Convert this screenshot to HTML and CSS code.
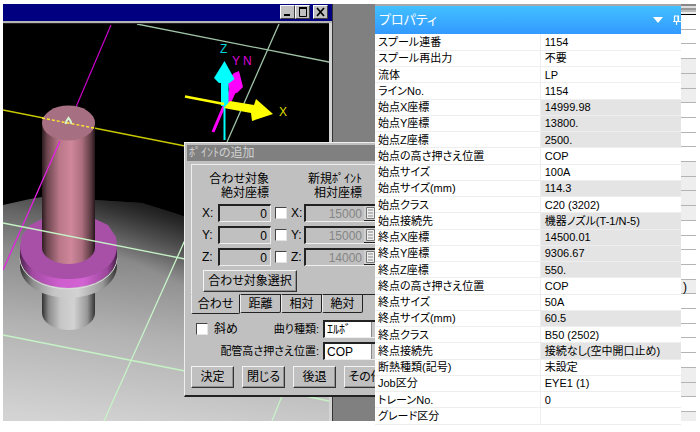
FILE: index.html
```html
<!DOCTYPE html>
<html lang="ja">
<head>
<meta charset="utf-8">
<title>プロパティ</title>
<link rel="stylesheet" href="styles.css">
</head>
<body>
<main class="desktop">
  <section class="viewer">
    <header class="viewer-bar">
      <button class="win-btn" aria-label="最小化"><svg viewBox="0 0 12 10"><path d="M2 8h6" stroke="#000" stroke-width="2"/></svg></button>
      <button class="win-btn" aria-label="最大化"><svg viewBox="0 0 12 10"><path d="M2 1.500h8M2.500 1v8.500h7V1" fill="none" stroke="#000"/><path d="M2 1h8" stroke="#000" stroke-width="2"/></svg></button>
      <button class="win-btn win-close" aria-label="閉じる"><svg viewBox="0 0 12 10"><path d="M2 1l7 8M9 1l-7 8" stroke="#000" stroke-width="1.700"/></svg></button>
    </header>
    <svg class="scene" viewBox="3 24 326 397" preserveAspectRatio="xMinYMin slice">
      <defs>
        <linearGradient id="ground" gradientUnits="userSpaceOnUse" x1="95" y1="194" x2="68" y2="421">
          <stop offset="0" stop-color="#404040"/><stop offset=".12" stop-color="#666"/><stop offset=".28" stop-color="#8a8a8a"/><stop offset=".6" stop-color="#b2b2b2"/><stop offset="1" stop-color="#d3d3d3"/>
        </linearGradient>
        <linearGradient id="shade" gradientUnits="userSpaceOnUse" x1="192" y1="206" x2="160" y2="275">
          <stop offset="0" stop-color="#000" stop-opacity=".75"/><stop offset="1" stop-color="#000" stop-opacity="0"/>
        </linearGradient>
        <linearGradient id="pipe">
          <stop offset="0" stop-color="#2c1c20"/><stop offset=".1" stop-color="#6d4650"/><stop offset=".33" stop-color="#b97788"/><stop offset=".55" stop-color="#cf879b"/><stop offset=".75" stop-color="#ad6f80"/><stop offset=".93" stop-color="#583840"/><stop offset="1" stop-color="#241619"/>
        </linearGradient>
        <linearGradient id="flange">
          <stop offset="0" stop-color="#512451"/><stop offset=".13" stop-color="#a34ba3"/><stop offset=".4" stop-color="#ce5ece"/><stop offset=".65" stop-color="#d363d3"/><stop offset=".9" stop-color="#9a479a"/><stop offset="1" stop-color="#482048"/>
        </linearGradient>
        <linearGradient id="steel">
          <stop offset="0" stop-color="#303030"/><stop offset=".13" stop-color="#8d8d8d"/><stop offset=".35" stop-color="#c6c6c6"/><stop offset=".6" stop-color="#d2d2d2"/><stop offset=".85" stop-color="#999"/><stop offset="1" stop-color="#333"/>
        </linearGradient>
      </defs>
      <path fill="#000" d="M3 24h340v400H3z"/>
      <path fill="url(#ground)" d="M3 205L30 199 42 197 95 200 142 203 180 215 240 240 343 300V424H3z"/>
      <path fill="url(#shade)" d="M95 200L142 203 180 215 240 240 343 300V424H95z"/>
      <g fill="none" stroke="#c6f3c6">
        <path stroke="#9fc3a6" stroke-width="1.300" d="M137 24L329 62M279 24L227 142"/>
        <path stroke-width="1.300" d="M3 335L185 371 329 401M185 240L104 421M282 396L272 421"/>
      </g>
      <path stroke="#c800c8" stroke-width="1.200" d="M111 25L76 107"/>
      <path stroke="#c8c800" stroke-width="1.300" d="M3 110L185 146"/>
      <path fill="url(#steel)" d="M42 285V313A26.500 17 0 0 0 95 313V285z"/>
      <path fill="url(#steel)" d="M20 254V266A48.500 32 0 0 0 117 266V254z"/>
      <path fill="none" stroke="#ddd" d="M20 258A48.500 31 0 0 0 117 258"/>
      <path fill="none" stroke="#888" d="M22 262A47 28 0 0 0 115 262"/>
      <path fill="url(#flange)" d="M20 246V256A48.500 32 0 0 0 117 256V246z"/>
      <path fill="#a850a8" d="M20 246L22 235 30 225 42 219H95L108 225 116 237 117 247C116 266 97 279 68 279S20 264 20 246z"/>
      <path fill="url(#pipe)" d="M42 123V248A26.500 16 0 0 0 95 248V123z"/>
      <ellipse cx="68.500" cy="123" rx="26.500" ry="17.500" fill="#a77082"/>
      <path stroke="#ffed30" stroke-width="1.400" stroke-dasharray="3 2" d="M42 118L94 128"/>
      <path fill="none" stroke="#d7f5d0" stroke-width="2" d="M65.500 124l1-3 2-3 2 3 1 3"/>
      <path stroke="#e322e3" stroke-width="1.300" d="M60 141L3 270"/>
      <path stroke="#c6f3c6" stroke-width="1.300" d="M3 223L185 259"/>
      <path fill="#f0f" d="M239 71l4 16-6 6-7-1-3-12 7-7z"/>
      <path stroke="#f0f" stroke-width="7" d="M234 88l-8 17"/>
      <path stroke="#f0f" stroke-width="3" d="M224 106l-11 26"/>
      <path fill="#0ff" d="M224.500 61l10 18-5 4h-1v23h-7.500V83h-2l-5-5z"/>
      <path stroke="#0ff" stroke-width="2" d="M224.500 105v35"/>
      <path stroke="#ff0" stroke-width="2.500" d="M185 96.500L224 104"/>
      <path fill="#ff0" d="M230 101l24 4 2-6 17 15-21 7-1-8-22-4-5-1z"/>
      <g class="axis-label">
        <text x="220" y="53" fill="#00d5d5">Z</text>
        <text x="232" y="65" fill="#d0d">Y</text>
        <text x="243" y="65" fill="#d0d">N</text>
        <text x="279" y="116" fill="#dd0">X</text>
      </g>
    </svg>
  </section>

  <section class="sheet" aria-hidden="true">
    <div class="sheet-head"></div>
    <div class="line"></div><div class="line"></div><div class="line"></div>
    <div class="line alt"></div><div class="line alt"></div><div class="line alt"></div>
    <div class="line"></div><div class="line"></div><div class="line"></div><div class="line"></div>
    <div class="line alt"></div><div class="line alt"></div><div class="line alt"></div><div class="line alt"></div>
    <div class="line"></div><div class="line"></div><div class="line"></div><div class="line"></div>
    <div class="line alt">)</div>
    <div class="line"></div><div class="line"></div><div class="line"></div><div class="line"></div><div class="line"></div>
    <div class="line alt"></div><div class="line alt"></div>
    <div class="line"></div>
    <div class="line alt last"></div>
  </section>

  <form class="dialog">
    <h2 class="dialog-title">ﾎﾟｲﾝﾄの追加</h2>
    <div class="tab-page">
      <div class="coords">
        <div class="coord-head from">合わせ対象<br>絶対座標</div>
        <div class="coord-head to">新規ﾎﾟｲﾝﾄ<br>相対座標</div>
        <label class="axis" for="ax">X:</label><input class="field" id="ax" value="0"><input class="check" type="checkbox" aria-label="X 固定">
        <label class="axis" for="rx">X:</label><span class="calc"><input class="field" id="rx" value="15000" disabled><button class="calc-btn" type="button" aria-label="電卓 X"><svg viewBox="0 0 12 14"><path d="M2.500 1.500h8v11h-8z" fill="#eee" stroke="#777"/><path d="M4 4h5M4 7h5M4 10h5" stroke="#888"/></svg></button></span>
        <label class="axis" for="ay">Y:</label><input class="field" id="ay" value="0"><input class="check" type="checkbox" aria-label="Y 固定">
        <label class="axis" for="ry">Y:</label><span class="calc"><input class="field" id="ry" value="15000" disabled><button class="calc-btn" type="button" aria-label="電卓 Y"><svg viewBox="0 0 12 14"><path d="M2.500 1.500h8v11h-8z" fill="#eee" stroke="#777"/><path d="M4 4h5M4 7h5M4 10h5" stroke="#888"/></svg></button></span>
        <label class="axis" for="az">Z:</label><input class="field" id="az" value="0"><input class="check" type="checkbox" aria-label="Z 固定">
        <label class="axis" for="rz">Z:</label><span class="calc"><input class="field" id="rz" value="14000" disabled><button class="calc-btn" type="button" aria-label="電卓 Z"><svg viewBox="0 0 12 14"><path d="M2.500 1.500h8v11h-8z" fill="#eee" stroke="#777"/><path d="M4 4h5M4 7h5M4 10h5" stroke="#888"/></svg></button></span>
      </div>
      <button class="push pick" type="button">合わせ対象選択</button>
    </div>
    <div class="tabs">
      <button class="tab active" type="button">合わせ</button>
      <button class="tab" type="button">距離</button>
      <button class="tab" type="button">相対</button>
      <button class="tab" type="button">絶対</button>
    </div>
    <div class="options">
      <input class="check" type="checkbox" id="slant"><label for="slant">斜め</label>
      <label class="opt-label" for="bend">曲り種類:</label>
      <select class="drop" id="bend"><option>ｴﾙﾎﾞ</option></select>
    </div>
    <div class="options">
      <label class="opt-label" for="hold">配管高さ押さえ位置:</label>
      <select class="drop" id="hold"><option>COP</option></select>
    </div>
    <div class="actions">
      <button class="push" type="button">決定</button>
      <button class="push" type="button">閉じる</button>
      <button class="push" type="button">後退</button>
      <button class="push" type="button">その他</button>
    </div>
  </form>

  <aside class="props">
    <header class="props-head">
      <h1>プロパティ</h1>
      <button class="head-btn" aria-label="メニュー"><svg width="10" height="6" viewBox="0 0 10 6"><path d="M0 0h10L5 6z" fill="#fff"/></svg></button>
      <button class="head-btn pin" aria-label="固定"><svg width="8" height="10" viewBox="0 0 8 10"><path d="M1.500 6V1h4v5M5 1v5M0 6.500h8M3.500 7v3" fill="none" stroke="#fff" stroke-width="1.200"/></svg></button>
    </header>
    <table class="grid">
      <tbody>
        <tr><th>スプール連番</th><td>1154</td></tr>
        <tr><th>スプール再出力</th><td>不要</td></tr>
        <tr><th>流体</th><td>LP</td></tr>
        <tr><th>ラインNo.</th><td>1154</td></tr>
        <tr class="locked"><th>始点X座標</th><td>14999.98</td></tr>
        <tr class="locked"><th>始点Y座標</th><td>13800.</td></tr>
        <tr class="locked"><th>始点Z座標</th><td>2500.</td></tr>
        <tr><th>始点の高さ押さえ位置</th><td>COP</td></tr>
        <tr><th>始点サイズ</th><td>100A</td></tr>
        <tr class="locked"><th>始点サイズ(mm)</th><td>114.3</td></tr>
        <tr><th>始点クラス</th><td>C20 (3202)</td></tr>
        <tr class="locked"><th>始点接続先</th><td>機器ノズル(T-1/N-5)</td></tr>
        <tr class="locked"><th>終点X座標</th><td>14500.01</td></tr>
        <tr class="locked"><th>終点Y座標</th><td>9306.67</td></tr>
        <tr class="locked"><th>終点Z座標</th><td>550.</td></tr>
        <tr><th>終点の高さ押さえ位置</th><td>COP</td></tr>
        <tr><th>終点サイズ</th><td>50A</td></tr>
        <tr class="locked"><th>終点サイズ(mm)</th><td>60.5</td></tr>
        <tr><th>終点クラス</th><td>B50 (2502)</td></tr>
        <tr class="locked"><th>終点接続先</th><td>接続なし(空中開口止め)</td></tr>
        <tr><th>断熱種類(記号)</th><td>未設定</td></tr>
        <tr><th>Job区分</th><td>EYE1 (1)</td></tr>
        <tr><th>トレーンNo.</th><td>0</td></tr>
        <tr><th>グレード区分</th><td></td></tr>
      </tbody>
    </table>
  </aside>
</main>
</body>
</html>
```

FILE: styles.css
```css
* { box-sizing: border-box; }

body {
  margin: 0;
  background: #fff;
  color: #000;
  font: 12px/14px "Liberation Sans", "Noto Sans CJK JP", sans-serif;
  font-feature-settings: "palt";
}

button, input, select {
  font: inherit;
  font-feature-settings: inherit;
  color: inherit;
  border-radius: 0;
  margin: 0;
  padding: 0;
}

.desktop {
  position: relative;
  min-height: 100vh;
  overflow: hidden;
}

.desktop::before {
  content: "";
  position: absolute;
  inset: 4px 19px 11px 332px;
  background: #808080;
}

/* 3D viewer window */
.viewer {
  position: absolute;
  inset: 4px auto 11px 3px;
  width: 47%;
  display: flex;
  flex-direction: column;
  box-sizing: content-box;
  border-right: 1px solid #333;
  background: #d4d4d4;
}

.viewer-bar {
  flex: none;
  display: flex;
  justify-content: flex-end;
  align-items: flex-start;
  height: 19px;
  padding: 1px 4px;
  background: #000080;
  border-bottom: 2px solid #b4b4b4;
}

.win-btn {
  width: 15px;
  height: 14px;
  background: #c0c0c0;
  border: 1px solid;
  border-color: #fff #404040 #404040 #fff;
  display: grid;
  place-items: center;
}

.win-btn svg { width: 12px; height: 10px; }
.win-close { margin-left: 3px; }

.scene {
  flex: 1;
  min-height: 0;
  width: calc(100% - 3px);
  border-top: 1px solid #222;
}

.axis-label { font: 12px "Liberation Sans", sans-serif; }

/* Sheet behind the property panel */
.sheet {
  position: absolute;
  inset: 4px 4px 11px auto;
  width: 16px;
  display: flex;
  flex-direction: column;
  background: #fff;
}

.sheet-head {
  flex: none;
  height: 11px;
  border-bottom: 1px solid #000;
  background: linear-gradient(#888 2px, #ddd 2px 4px, #999 4px 6px, #bbb 6px 8px, #eee 8px);
}

.line {
  flex: 3 1 0;
  min-height: 0;
  padding-left: 3px;
  border-bottom: 1px solid #b4b4b4;
}

.alt { background: #eee; }
.last { flex-grow: 2; border-bottom: 0; }

/* Add-point dialog */
.dialog {
  position: absolute;
  top: 142px;
  left: 184px;
  width: 240px;
  padding: 2px;
  background: #c0c0c0;
  border: 1px solid;
  border-color: #eee #222 #222 #eee;
  border-bottom-width: 2px;
}

.dialog-title {
  margin: 0;
  padding: 0 2px;
  background: #808080;
  color: #d0d0d0;
  font: inherit;
  line-height: 16px;
}

.tab-page {
  margin: 3px 0 0 4px;
  padding: 7px 0 2px 10px;
  border: solid #eee;
  border-width: 1px 0 0 1px;
}

.coords {
  display: grid;
  grid-template-columns: 16px 53px 20px 13px 76px;
  gap: 4px 0;
  align-items: center;
  justify-content: start;
}

.coord-head { grid-column: span 3; }
.coord-head.from { text-align: right; padding-right: 22px; }
.coord-head.to { grid-column: span 2; text-align: right; padding-right: 18px; }

.field {
  width: 100%;
  height: 18px;
  padding: 0 3px;
  text-align: right;
  background: #c0c0c0;
  border: 1px solid;
  border-color: #222 #eee #eee #222;
  border-width: 2px 1px 1px 2px;
}

.field:disabled { color: #858585; padding-right: 17px; }

.calc { display: flex; align-items: center; }
.calc-btn {
  flex: none;
  width: 14px;
  height: 15px;
  margin-left: -16px;
  background: #d0d0d0;
  border: 0;
  border-bottom: 1px solid #222;
}
.calc-btn svg { display: block; width: 12px; height: 14px; }

.check {
  appearance: none;
  width: 12px;
  height: 12px;
  background: #fff;
  border: 1px solid;
  border-color: #444 #e4e4e4 #e4e4e4 #444;
}

.coords .check { margin-left: 4px; }

.push {
  width: 43px;
  height: 22px;
  background: #c0c0c0;
  border: 1px solid;
  border-color: #f4f4f4 #333 #333 #f4f4f4;
  box-shadow: inset -1px -1px #909090;
  white-space: nowrap;
}

.pick { width: 94px; margin: 4px 0 0 1px; }

.tabs {
  display: flex;
  align-items: flex-start;
  margin-left: 4px;
}

.tab {
  width: 41px;
  height: 19px;
  background: #c0c0c0;
  border: 1px solid;
  border-color: #222 #222 #222 #eee;
  border-radius: 0 0 2px 2px;
}

.tab.active { width: 49px; height: 20px; border-top-color: #c0c0c0; }

.tabs::after {
  content: "";
  flex: 1;
  border-top: 1px solid #222;
}

.options {
  display: flex;
  align-items: center;
  gap: 6px;
  height: 18px;
  margin: 4px 34px 0 9px;
}

.tabs + .options { margin-top: 6px; }
.opt-label { margin-left: auto; font-size: 11px; }

.drop {
  appearance: none;
  width: 64px;
  height: 18px;
  margin-left: -2px;
  padding: 0 2px;
  background: linear-gradient(90deg, #fff 46px, #888 46px 47px, #c8c8c8 47px);
  border: 1px solid;
  border-color: #222 #eee #eee #222;
  border-width: 2px 1px 1px 2px;
}

.actions {
  display: flex;
  gap: 8px;
  margin: 6px 0 5px 4px;
}

/* Property panel */
.props {
  position: absolute;
  inset: 4px 19px 7px 375px;
  display: flex;
  flex-direction: column;
  background: #fff;
  border-top: 2px solid #a8a8a8;
}

.props-head {
  flex: none;
  display: flex;
  align-items: center;
  gap: 10px;
  height: 28px;
  padding-left: 4px;
  background: linear-gradient(#42c0ff, #3399ff);
  color: #fff;
}

.props-head h1 {
  margin: 0 auto 0 0;
  font-size: 13px;
  font-weight: 400;
}

.head-btn {
  display: flex;
  background: none;
  border: 0;
}

.pin { width: 8px; }

.grid {
  width: 100%;
  table-layout: fixed;
  border-collapse: collapse;
  font-size: 11px;
}

.grid th, .grid td {
  height: calc((100vh - 42px) / 24);
  padding: 0 3px;
  border-bottom: 1px solid #eee;
  font-weight: 400;
  line-height: 14px;
  text-align: left;
  white-space: nowrap;
}

.grid th { width: 54%; }

.grid td {
  padding-left: 4px;
  border-left: 1px solid #eee;
}

.locked td { background: #e4e4e4; }
```
